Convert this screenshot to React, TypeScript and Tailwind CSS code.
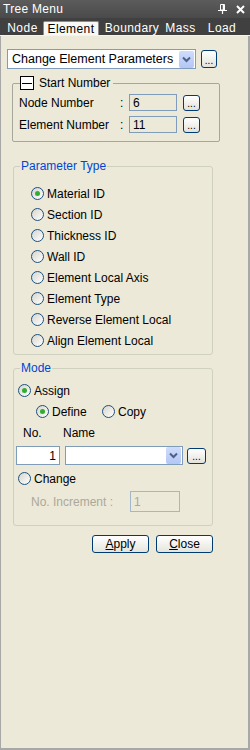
import React from 'react';

const font = { fontFamily: '"Liberation Sans", Arial, sans-serif' };

const Radio: React.FC<{ checked?: boolean }> = ({ checked }) => (
  <span className="w-[13px] h-[13px] rounded-full border border-[#1c5180] bg-linear-to-br from-[#d6d5cd] to-white flex items-center justify-center shrink-0">
    {checked && <span className="w-[5px] h-[5px] rounded-full bg-[#2fae2f]" />}
  </span>
);

const DotsButton: React.FC<{ w: string; h: string }> = ({ w, h }) => (
  <button
    className={`${w} ${h} shrink-0 rounded-[3px] border border-[#003c74] bg-linear-to-b from-white to-[#e3e2da] flex items-end justify-center pb-[2px] text-[10px] leading-[8px] text-black`}
  >
    ...
  </button>
);

const ArrowButton: React.FC = () => (
  <span className="w-[15px] h-[17px] shrink-0 rounded-[2px] bg-linear-to-b from-[#cfdcfd] to-[#b4c6f5] flex items-center justify-center">
    <svg width="9" height="7" viewBox="0 0 9 7">
      <path d="M1 1.5 L4.5 5 L8 1.5" fill="none" stroke="#4d6185" strokeWidth="2" />
    </svg>
  </span>
);

const RadioRow: React.FC<{ label: string; checked?: boolean }> = ({ label, checked }) => (
  <div className="h-[21px] flex items-center gap-[3px]">
    <Radio checked={checked} />
    <span>{label}</span>
  </div>
);

const paramTypes = [
  'Material ID',
  'Section ID',
  'Thickness ID',
  'Wall ID',
  'Element Local Axis',
  'Element Type',
  'Reverse Element Local',
  'Align Element Local',
];

export default function App() {
  return (
    <div
      className="w-[250px] h-[750px] flex flex-col bg-[#ece9d8] text-[12px] leading-[14px] text-black shadow-[inset_1px_0_0_#a8a8a8,inset_-2px_0_0_#a8a8a8,inset_0_-2px_0_#a8a8a8]"
      style={font}
    >
      {/* title bar */}
      <div className="h-[18px] shrink-0 flex items-center bg-linear-to-b from-[#5c5c5c] to-[#4a4a4a] text-white pl-[3px] pr-[5px]">
        <span className="tracking-[0.3px]">Tree Menu</span>
        <div className="ml-auto flex items-center gap-[9px]">
          <svg width="9" height="10" viewBox="0 0 9 10">
            <path d="M2.5 0.5 H6.5 V6 H2.5 Z" fill="none" stroke="white" strokeWidth="1" />
            <path d="M5.5 0.5 V6" stroke="white" strokeWidth="1.5" />
            <path d="M0 6.5 H9" stroke="white" strokeWidth="1" />
            <path d="M4.5 6.5 V10" stroke="white" strokeWidth="1.2" />
          </svg>
          <svg width="9" height="9" viewBox="0 0 9 9">
            <path d="M1 1 L8 8 M8 1 L1 8" stroke="white" strokeWidth="2" />
          </svg>
        </div>
      </div>

      {/* tab bar */}
      <div className="h-[18px] shrink-0 flex items-end bg-[#404040] text-white pl-[2px] border-b border-[#f4f3ee]">
        <span className="w-[39px] h-[14px] flex items-center justify-center tracking-[0.5px] pl-[2px]">Node</span>
        <span className="ml-[2px] w-[56px] h-[14px] flex items-center justify-center bg-[#f8f8f5] text-black border border-b-0 border-[#8c8c8c] rounded-t-[2px] tracking-[0.4px]">
          Element
        </span>
        <span className="ml-[4px] w-[58px] h-[14px] flex items-center justify-center tracking-[0.4px]">Boundary</span>
        <span className="ml-[1px] w-[37px] h-[14px] flex items-center justify-center tracking-[0.4px]">Mass</span>
        <span className="ml-[1px] w-[44px] h-[14px] flex items-center justify-center tracking-[0.4px]">Load</span>
      </div>

      {/* content */}
      <div className="flex flex-col">
        {/* function combo */}
        <div className="mt-[13px] ml-[7px] flex items-center gap-[5px]">
          <div className="w-[189px] h-[20px] border border-[#7f9db9] bg-white flex items-center pl-[4px] pr-[1px]">
            <span className="flex-1 text-[12.5px]">Change Element Parameters</span>
            <ArrowButton />
          </div>
          <DotsButton w="w-[16px]" h="h-[18px]" />
        </div>

        {/* start number */}
        <fieldset className="mt-[7px] ml-[12px] w-[208px] border border-[#a6a69c] rounded-[2px]">
          <legend className="ml-[7px] pr-[3px] flex items-center">
            <span className="w-[14px] h-[14px] border border-black bg-white flex items-center justify-center">
              <span className="w-[10px] h-[1px] bg-black" />
            </span>
            <span className="ml-[5px]">Start Number</span>
          </legend>
          <div className="flex flex-col gap-[5px] pl-[6px] pt-[4px] pb-[8px]">
            {[
              ['Node Number', '6'],
              ['Element Number', '11'],
            ].map(([label, value]) => (
              <div key={label} className="flex items-center h-[17px]">
                <span className="w-[101px]">{label}</span>
                <span className="w-[9px]">:</span>
                <span className="w-[48px] h-[17px] border border-[#7f9db9] flex items-center pl-[3px]">{value}</span>
                <span className="ml-[6px]">
                  <DotsButton w="w-[17px]" h="h-[16px]" />
                </span>
              </div>
            ))}
          </div>
        </fieldset>

        {/* parameter type */}
        <fieldset className="mt-[17px] ml-[13px] w-[200px] border border-[#d0d0bf] rounded-[3px]">
          <legend className="ml-[6px] px-[1px] text-[#0046d5]">Parameter Type</legend>
          <div className="pl-[17px] pt-[10px] pb-[3px]">
            {paramTypes.map((t, i) => (
              <RadioRow key={t} label={t} checked={i === 0} />
            ))}
          </div>
        </fieldset>

        {/* mode */}
        <fieldset className="mt-[6px] ml-[13px] w-[200px] border border-[#d0d0bf] rounded-[3px]">
          <legend className="ml-[6px] px-[1px] text-[#0046d5]">Mode</legend>
          <div className="pl-[2px] pt-[5px] pb-[13px]">
            <div className="pl-[2px]">
              <RadioRow label="Assign" checked />
            </div>
            <div className="h-[21px] flex items-center pl-[20px]">
              <div className="w-[66px] flex items-center gap-[3px]">
                <Radio checked />
                <span>Define</span>
              </div>
              <div className="flex items-center gap-[3px]">
                <Radio />
                <span>Copy</span>
              </div>
            </div>
            <div className="h-[22px] flex items-center pl-[7px]">
              <span className="w-[40px]">No.</span>
              <span>Name</span>
            </div>
            <div className="mt-[2px] h-[19px] flex items-center">
              <span className="w-[44px] h-[19px] border border-[#7f9db9] bg-white flex items-center justify-end pr-[3px]">1</span>
              <span className="ml-[5px] w-[118px] h-[19px] border border-[#7f9db9] bg-white flex items-center justify-end pr-[1px]">
                <ArrowButton />
              </span>
              <span className="ml-[4px]">
                <DotsButton w="w-[19px]" h="h-[16px]" />
              </span>
            </div>
            <div className="mt-[3px] pl-[2px]">
              <RadioRow label="Change" />
            </div>
            <div className="mt-[2px] h-[21px] flex items-center pl-[15px] text-[#aca899]">
              <span className="w-[99px]">No. Increment :</span>
              <span className="w-[50px] h-[21px] border border-[#a3b7cb] flex items-center pl-[3px]">1</span>
            </div>
          </div>
        </fieldset>

        {/* buttons */}
        <div className="mt-[9px] ml-[92px] flex gap-[7px]">
          {['Apply', 'Close'].map((b) => (
            <button
              key={b}
              className="w-[57px] h-[18px] rounded-[3px] border border-[#003c74] bg-linear-to-b from-white to-[#e6e5dc] flex items-center justify-center text-[12px]"
            >
              <span className="underline">{b[0]}</span>
              {b.slice(1)}
            </button>
          ))}
        </div>
      </div>
    </div>
  );
}
